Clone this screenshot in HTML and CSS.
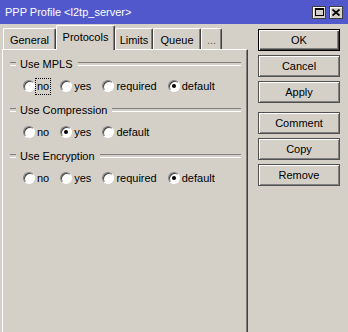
FILE: index.html
```html
<!DOCTYPE html>
<html>
<head>
<meta charset="utf-8">
<link rel="stylesheet" href="styles.css">
</head>
<body>
<div class="window">
  <div class="titlebar">
    <span class="title">PPP Profile &lt;l2tp_server&gt;</span>
    <div class="tbtns">
      <span class="tbtn"><svg width="9" height="8" viewBox="0 0 9 8"><rect x="0.5" y="0.5" width="8" height="7" fill="none" stroke="#000"/><rect x="0" y="0" width="9" height="2" fill="#000"/></svg></span>
      <span class="tbtn"><svg width="8" height="7" viewBox="0 0 8 7"><path d="M0.5 0.5 L7.5 6.5 M7.5 0.5 L0.5 6.5" stroke="#000" stroke-width="1.8"/></svg></span>
    </div>
  </div>
  <div class="main">
    <div class="left">
      <div class="tabs">
        <div class="tab tab-general">General</div>
        <div class="tab tab-protocols active">Protocols</div>
        <div class="tab tab-limits">Limits</div>
        <div class="tab tab-queue">Queue</div>
        <div class="tab tab-more">...</div>
      </div>
      <div class="panel">
        <div class="group">
          <div class="ghead"><span class="gtitle">Use MPLS</span></div>
          <div class="radios">
            <label class="radio"><span class="dot"></span><span class="rtext focus">no</span></label>
            <label class="radio"><span class="dot"></span><span class="rtext">yes</span></label>
            <label class="radio"><span class="dot"></span><span class="rtext">required</span></label>
            <label class="radio"><span class="dot checked"></span><span class="rtext">default</span></label>
          </div>
        </div>
        <div class="group">
          <div class="ghead"><span class="gtitle">Use Compression</span></div>
          <div class="radios">
            <label class="radio"><span class="dot"></span><span class="rtext">no</span></label>
            <label class="radio"><span class="dot checked"></span><span class="rtext">yes</span></label>
            <label class="radio"><span class="dot"></span><span class="rtext">default</span></label>
          </div>
        </div>
        <div class="group">
          <div class="ghead"><span class="gtitle">Use Encryption</span></div>
          <div class="radios">
            <label class="radio"><span class="dot"></span><span class="rtext">no</span></label>
            <label class="radio"><span class="dot"></span><span class="rtext">yes</span></label>
            <label class="radio"><span class="dot"></span><span class="rtext">required</span></label>
            <label class="radio"><span class="dot checked"></span><span class="rtext">default</span></label>
          </div>
        </div>
      </div>
    </div>
    <div class="right">
      <div class="btn default">OK</div>
      <div class="btn">Cancel</div>
      <div class="btn">Apply</div>
      <div class="btn sep">Comment</div>
      <div class="btn">Copy</div>
      <div class="btn">Remove</div>
    </div>
  </div>
</div>
</body>
</html>
```
FILE: styles.css
```css
* { box-sizing: border-box; }
html, body { margin: 0; padding: 0; }
body {
  width: 348px;
  height: 332px;
  overflow: hidden;
  background: #d4d0c8;
  font-family: "Liberation Sans", Arial, sans-serif;
  font-size: 11px;
  color: #000;
}
.window { width: 348px; height: 332px; display: flex; flex-direction: column; }
.titlebar {
  height: 24px;
  flex: none;
  background: #5058cc;
  color: #fff;
  display: flex;
  align-items: center;
  justify-content: space-between;
  padding: 0 5px 0 5px;
}
.title { font-size: 11px; }
.tbtns { display: flex; gap: 3px; }
.tbtn {
  width: 14px;
  height: 13px;
  background: #d4d0c8;
  border: 1px solid #404040;
  box-shadow: inset 1px 1px #fff;
  display: flex;
  align-items: center;
  justify-content: center;
}
.main { flex: 1; display: flex; }
.left { width: 246px; margin-left: 2px; display: flex; flex-direction: column; }
.tabs {
  height: 25px;
  display: flex;
  align-items: flex-end;
  padding-left: 1px;
  position: relative;
  z-index: 1;
}
.tab {
  height: 21px;
  display: flex;
  align-items: center;
  justify-content: center;
  background: #d4d0c8;
  border-top: 1px solid #fff;
  border-left: 1px solid #fff;
  border-right: 1px solid #404040;
  box-shadow: inset -1px 0 #808080;
  border-radius: 2px 2px 0 0;
  padding-top: 1px;
}
.tab.active {
  height: 25px;
  margin-bottom: -1px;
  padding-top: 0;
  padding-bottom: 2px;
}
.tab-general { width: 53px; }
.tab-protocols { width: 59px; }
.tab-limits { width: 38px; }
.tab-queue { width: 48px; }
.tab-more { width: 21px; color: #606060; }
.panel {
  flex: 1;
  border-top: 1px solid #fff;
  border-left: 1px solid #fff;
  border-right: 1px solid #404040;
  box-shadow: inset -1px 0 #808080;
  padding: 7px 6px 0 7px;
}
.group { margin-bottom: 10px; }
.ghead { height: 14px; display: flex; align-items: center; }
.ghead::before {
  content: "";
  width: 6px;
  height: 2px;
  border-top: 1px solid #808080;
  border-bottom: 1px solid #fff;
  margin-right: 4px;
}
.ghead::after {
  content: "";
  flex: 1;
  height: 2px;
  border-top: 1px solid #808080;
  border-bottom: 1px solid #fff;
  margin-left: 5px;
}
.radios {
  margin-top: 8px;
  height: 14px;
  display: flex;
  align-items: center;
  gap: 9px;
  padding-left: 13px;
}
.radio { display: flex; align-items: center; gap: 0; }
.dot {
  width: 12px;
  height: 12px;
  border-radius: 50%;
  background: #fff;
  border: 1px solid;
  border-color: #808080 #fff #fff #808080;
  box-shadow: inset 1px 1px #404040;
  display: flex;
  align-items: center;
  justify-content: center;
}
.dot.checked::after {
  content: "";
  width: 4px;
  height: 4px;
  border-radius: 50%;
  background: #000;
}
.rtext { padding: 1px 1px; border: 1px solid transparent; line-height: 13px; }
.rtext.focus { border: 1px dotted #000; }
.right {
  width: 82px;
  margin-left: 10px;
  padding-top: 5px;
  display: flex;
  flex-direction: column;
  gap: 4px;
}
.btn {
  height: 22px;
  display: flex;
  align-items: center;
  justify-content: center;
  background: #d4d0c8;
  border: 1px solid #505050;
  box-shadow: inset 1px 1px #fff, inset -1px -1px #808080;
}
.btn.default {
  border-color: #000;
  box-shadow: inset 1px 1px #fff, inset -1px -1px #404040, inset -2px -2px #808080;
}
.btn.sep { margin-top: 5px; }
```
